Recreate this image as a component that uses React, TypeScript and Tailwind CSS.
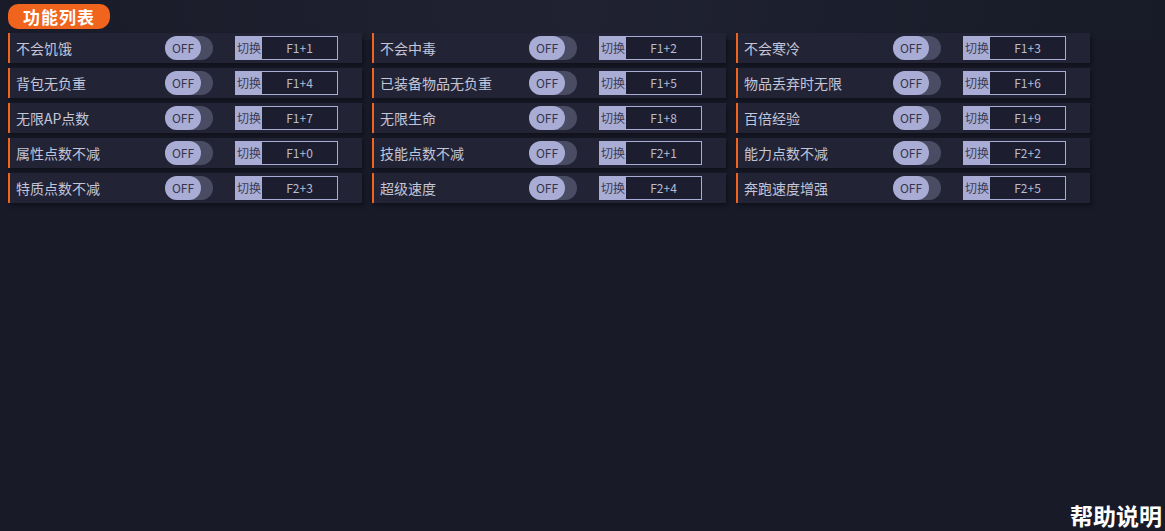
const items: [string, string][] = [
  ["不会饥饿", "F1+1"],
  ["不会中毒", "F1+2"],
  ["不会寒冷", "F1+3"],
  ["背包无负重", "F1+4"],
  ["已装备物品无负重", "F1+5"],
  ["物品丢弃时无限", "F1+6"],
  ["无限AP点数", "F1+7"],
  ["无限生命", "F1+8"],
  ["百倍经验", "F1+9"],
  ["属性点数不减", "F1+0"],
  ["技能点数不减", "F2+1"],
  ["能力点数不减", "F2+2"],
  ["特质点数不减", "F2+3"],
  ["超级速度", "F2+4"],
  ["奔跑速度增强", "F2+5"],
];

function Row({ label, hotkey }: { label: string; hotkey: string }) {
  return (
    <div className="flex h-[30px] items-center border-l-2 border-[#f0641e] bg-[#222436] shadow-[2px_3px_4px_rgba(0,0,0,0.35)]">
      <span className="w-[155px] pl-[6px] text-[14px] text-[#c3c5d8]">{label}</span>
      <div className="flex h-[24px] w-[48px] items-center rounded-full bg-[#4a4c64]">
        <div className="flex h-[24px] w-[36px] items-center justify-center rounded-full bg-[#a9acd4] text-[12px] text-[#34364d]">
          OFF
        </div>
      </div>
      <div className="ml-[22px] flex h-[24px] w-[103px] border border-[#a9acd4]">
        <div className="flex w-[26px] items-center justify-center bg-[#a9acd4] text-[12px] text-[#3a3c55]">
          切换
        </div>
        <div className="flex flex-1 items-center justify-center bg-[#1c1e30] text-[12px] text-[#b9bbd2]">
          {hotkey}
        </div>
      </div>
    </div>
  );
}

export default function App() {
  return (
    <div
      className="relative h-[531px] w-[1165px] overflow-hidden bg-[#181a28]"
      style={{ fontFamily: '"Noto Sans CJK SC", "Noto Sans", sans-serif' }}
    >
      <div className="pointer-events-none absolute inset-x-0 top-0 h-[40px] bg-gradient-to-r from-[#191b29] via-[#202231] to-[#171a27]" />
      <div className="relative px-[8px] pt-[4px]">
        <div className="flex h-[25px] w-[102px] items-center justify-center rounded-[10px] rounded-br-[12px] bg-[#f0641e] text-[17px] font-bold tracking-[1px] text-white">
          功能列表
        </div>
        <div className="mt-[4px] grid w-[1082px] grid-cols-3 gap-x-[10px] gap-y-[5px]">
          {items.map(([l, k]) => (
            <Row key={l} label={l} hotkey={k} />
          ))}
        </div>
      </div>
      <div className="absolute bottom-0 right-[3px] text-[23px] font-bold leading-[31px] text-white">
        帮助说明
      </div>
    </div>
  );
}
